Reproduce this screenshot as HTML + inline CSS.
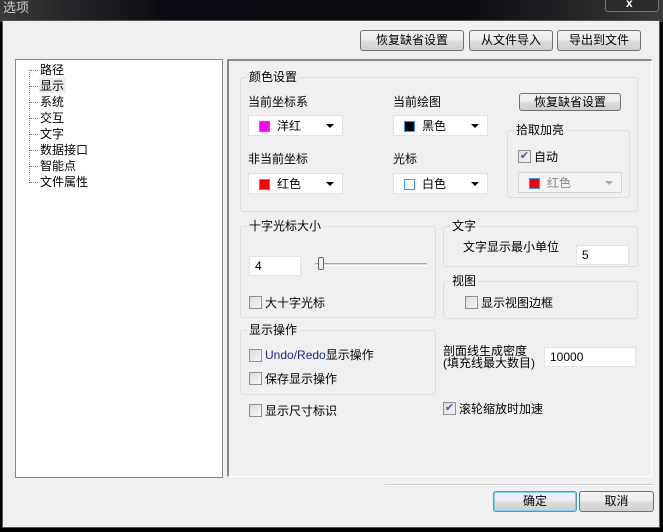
<!DOCTYPE html>
<html><head><meta charset="utf-8"><style>
*{margin:0;padding:0;box-sizing:border-box}
body{width:663px;height:532px;overflow:hidden;background:#000;font:12px "Liberation Sans","Noto Sans CJK SC",sans-serif;color:#000;position:relative}
.a{position:absolute}
.t{position:absolute;white-space:nowrap;line-height:14px}
.btn{position:absolute;border:1px solid #707070;border-radius:3px;background:linear-gradient(#f2f2f2 0%,#ebebeb 50%,#dddddd 51%,#cfcfcf 100%);text-align:center;line-height:18px;font-size:12px}
.grp{position:absolute;border:1px solid #d5dfe5;border-radius:3px}
.gl{position:absolute;top:-8px;left:6px;background:#f0f0f0;padding:0 2px;line-height:14px}
.cmb{position:absolute;background:#fff;border:1px solid #e3e3e3;height:21px}
.sw{position:absolute;left:10px;top:5px;width:11px;height:11px;border:1px solid #3399ff}
.cmb .lb{position:absolute;left:28px;top:3px;line-height:14px}
.arr{position:absolute;right:8px;top:8px;width:0;height:0;border-left:4px solid transparent;border-right:4px solid transparent;border-top:4px solid #000}
.cb{position:absolute;width:13px;height:13px;border:1px solid #8f8f8f;background:linear-gradient(135deg,#dcdcdc,#f6f6f6)}
.inp{position:absolute;background:#fff;border:1px solid #e3e3e3;padding-left:5px;line-height:18px}
.h{position:absolute;left:30px;width:8px;border-top:1px dotted #888}
.ck{position:absolute;color:#4a5f9a;font-size:11px;line-height:13px;width:13px;text-align:center}
</style></head><body>
<div class="a" style="left:0;top:0;width:663px;height:22px;background:linear-gradient(90deg,#3a3a3a 0%,#0a0a12 25%,#0a0a10 70%,#3a3a3a 100%)"></div>
<div class="t" style="left:3px;top:0;color:#ccc;font-size:13px;line-height:16px">选项</div>
<div class="a" style="left:605px;top:-2px;width:54px;height:14px;border:1px solid #777;border-radius:3px;background:#2a2a2a"></div>
<div class="t" style="left:626px;top:-4px;color:#fff;font-weight:bold">x</div>
<div class="a" style="left:2px;top:20px;width:658px;height:508px;background:#f0f0f0;border:1px solid #555"></div>

<div class="btn" style="left:360px;top:30px;width:104px;height:21px">恢复缺省设置</div>
<div class="btn" style="left:469px;top:30px;width:84px;height:21px">从文件导入</div>
<div class="btn" style="left:557px;top:30px;width:84px;height:21px">导出到文件</div>

<div class="a" style="left:15px;top:59px;width:208px;height:419px;background:#fff;border:1px solid #828790"></div>
<div class="a" style="left:29px;top:70px;height:113px;border-left:1px dotted #888"></div>
<div class="h" style="top:70px"></div><div class="h" style="top:86px"></div><div class="h" style="top:102px"></div><div class="h" style="top:118px"></div><div class="h" style="top:134px"></div><div class="h" style="top:150px"></div><div class="h" style="top:166px"></div><div class="h" style="top:182px"></div>
<div class="t" style="left:40px;top:63px">路径</div>
<div class="a" style="left:39px;top:78px;width:27px;height:15px;background:#eee"></div>
<div class="t" style="left:40px;top:79px">显示</div>
<div class="t" style="left:40px;top:95px">系统</div>
<div class="t" style="left:40px;top:111px">交互</div>
<div class="t" style="left:40px;top:127px">文字</div>
<div class="t" style="left:40px;top:143px">数据接口</div>
<div class="t" style="left:40px;top:159px">智能点</div>
<div class="t" style="left:40px;top:175px">文件属性</div>

<div class="a" style="left:227px;top:59px;width:425px;height:418px;border-left:2px solid #888;border-top:2px solid #888;border-right:1px solid #fff;border-bottom:1px solid #fff"></div>

<div class="grp" style="left:240px;top:77px;width:398px;height:135px"><span class="gl">颜色设置</span></div>
<div class="t" style="left:248px;top:95px">当前坐标系</div>
<div class="cmb" style="left:248px;top:115px;width:95px"><div class="sw" style="background:#f0f"></div><span class="lb">洋红</span><div class="arr"></div></div>
<div class="t" style="left:393px;top:95px">当前绘图</div>
<div class="cmb" style="left:393px;top:115px;width:95px"><div class="sw" style="background:#000"></div><span class="lb">黑色</span><div class="arr"></div></div>
<div class="btn" style="left:519px;top:93px;width:102px;height:18px;line-height:16px">恢复缺省设置</div>
<div class="t" style="left:248px;top:152px">非当前坐标</div>
<div class="cmb" style="left:248px;top:173px;width:95px"><div class="sw" style="background:#f00"></div><span class="lb">红色</span><div class="arr"></div></div>
<div class="t" style="left:393px;top:152px">光标</div>
<div class="cmb" style="left:393px;top:173px;width:95px"><div class="sw" style="background:#fff"></div><span class="lb">白色</span><div class="arr"></div></div>
<div class="grp" style="left:507px;top:130px;width:123px;height:68px"><span class="gl">拾取加亮</span></div>
<div class="cb" style="left:518px;top:150px"></div><div class="ck" style="left:518px;top:150px">✔</div>
<div class="t" style="left:534px;top:150px">自动</div>
<div class="a" style="left:518px;top:172px;width:104px;height:21px;background:#f4f4f4;border:1px solid #d5d5d5"><div class="sw" style="background:#f00;border-color:#3399ff"></div><span class="t" style="left:28px;top:3px;color:#888">红色</span><div class="arr" style="border-top-color:#aaa"></div></div>

<div class="grp" style="left:240px;top:226px;width:196px;height:92px"><span class="gl">十字光标大小</span></div>
<div class="inp" style="left:249px;top:256px;width:52px;height:20px">4</div>
<div class="a" style="left:315px;top:263px;width:112px;height:3px;border-top:1px solid #aaa;border-bottom:1px solid #fff;background:#ddd"></div>
<div class="a" style="left:318px;top:257px;width:6px;height:13px;border:1px solid #666;border-radius:2px;background:#eee"></div>
<div class="cb" style="left:249px;top:296px"></div><div class="t" style="left:265px;top:296px">大十字光标</div>

<div class="grp" style="left:443px;top:226px;width:195px;height:41px"><span class="gl">文字</span></div>
<div class="t" style="left:463px;top:240px">文字显示最小单位</div>
<div class="inp" style="left:576px;top:245px;width:53px;height:20px">5</div>
<div class="grp" style="left:443px;top:281px;width:195px;height:38px"><span class="gl">视图</span></div>
<div class="cb" style="left:465px;top:296px"></div><div class="t" style="left:481px;top:296px">显示视图边框</div>

<div class="grp" style="left:240px;top:330px;width:196px;height:65px"><span class="gl">显示操作</span></div>
<div class="cb" style="left:249px;top:349px"></div><div class="t" style="left:265px;top:348px"><span style="color:#1a2a8a">Undo/Redo</span>显示操作</div>
<div class="cb" style="left:249px;top:372px"></div><div class="t" style="left:265px;top:372px">保存显示操作</div>
<div class="t" style="left:443px;top:345px;line-height:12px">剖面线生成密度<br>(填充线最大数目)</div>
<div class="inp" style="left:544px;top:347px;width:92px;height:20px">10000</div>
<div class="cb" style="left:249px;top:404px"></div><div class="t" style="left:265px;top:404px">显示尺寸标识</div>
<div class="cb" style="left:443px;top:402px"></div><div class="ck" style="left:443px;top:402px">✔</div><div class="t" style="left:459px;top:402px">滚轮缩放时加速</div>

<div class="a" style="left:385px;top:484px;width:268px;height:2px;border-top:1px solid #ccc;border-bottom:1px solid #fff"></div>
<div class="btn" style="left:493px;top:491px;width:84px;height:21px;border-color:#3c9fd8;box-shadow:inset 0 0 0 1px #7fd0f5">确定</div>
<div class="btn" style="left:579px;top:491px;width:75px;height:21px">取消</div>
</body></html>
